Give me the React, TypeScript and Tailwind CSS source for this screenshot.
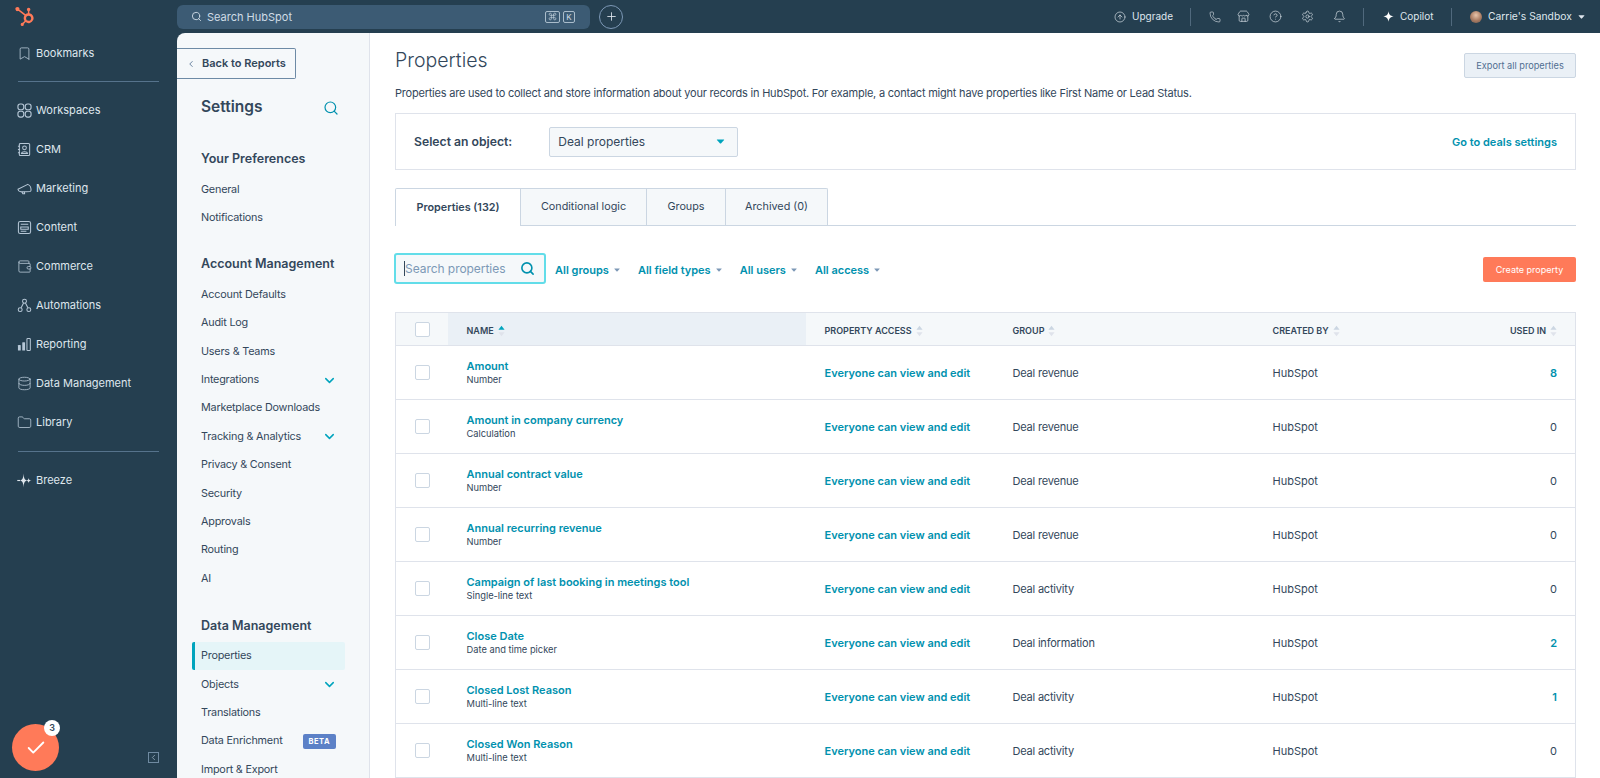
import React from "react";
import { SiHubspot } from "react-icons/si";
import {
  Bookmark, Wallet, Database, Folder,
  Search, ChevronDown, ChevronLeft, Plus, Command, CircleArrowUp, Phone, Store, CircleHelp,
  Settings, Bell, Check,
} from "lucide-react";

const font = "font-['Inter','Liberation_Sans',sans-serif]";

function Grid4({ className }: { className?: string }) {
  return (
    <svg viewBox="0 0 16 16" className={className} fill="none" stroke="currentColor" strokeWidth="1.2">
      <rect x="1" y="1" width="6.2" height="6.2" rx="2.4" />
      <rect x="8.8" y="1" width="6.2" height="6.2" rx="2.4" />
      <rect x="1" y="8.8" width="6.2" height="6.2" rx="2.4" />
      <rect x="8.8" y="8.8" width="6.2" height="6.2" rx="2.4" />
    </svg>
  );
}

function CrmIcon({ className }: { className?: string }) {
  return (
    <svg viewBox="0 0 16 16" className={className} fill="none" stroke="currentColor" strokeWidth="1.1">
      <rect x="2.5" y="1.5" width="11" height="13" rx="1.2" />
      <circle cx="8" cy="6.2" r="2" />
      <path d="M4.8 12.2 C5.2 9.8 10.8 9.8 11.2 12.2 Z" />
      <path d="M1 4.5 H3 M1 8 H3 M1 11.5 H3" />
    </svg>
  );
}

function MegaIcon({ className }: { className?: string }) {
  return (
    <svg viewBox="0 0 16 16" className={className} fill="none" stroke="currentColor" strokeWidth="1.1" strokeLinejoin="round">
      <path d="M1 8.8 L11.5 3.6 C13.6 4.4 15 7 15 9.6 C15 10.4 14.6 11 13.8 11.2 L5 11.6 C3 11.6 1.4 10.6 1 8.8Z" />
      <path d="M5.4 11.6 L6.2 13.6 H8.2 L7.8 11.5" />
    </svg>
  );
}

function ContentIcon({ className }: { className?: string }) {
  return (
    <svg viewBox="0 0 16 16" className={className} fill="none" stroke="currentColor" strokeWidth="1.1">
      <rect x="1.5" y="1.5" width="13" height="13" rx="2" />
      <path d="M4 4.5 H12 M4 7.5 H12 V9.8 H4Z M4 12 H10" />
    </svg>
  );
}

function AutoIcon({ className }: { className?: string }) {
  return (
    <svg viewBox="0 0 16 16" className={className} fill="none" stroke="currentColor" strokeWidth="1.1">
      <circle cx="8" cy="3.4" r="2.1" />
      <circle cx="3.4" cy="12.4" r="2.1" />
      <circle cx="12.6" cy="12.4" r="2.1" />
      <path d="M7 5.3 L4.4 10.5 M9 5.3 L11.6 10.5" />
    </svg>
  );
}

function ReportIcon({ className }: { className?: string }) {
  return (
    <svg viewBox="0 0 16 16" className={className}>
      <rect x="1" y="8.5" width="3" height="6" rx="0.5" fill="currentColor" />
      <rect x="5.6" y="5.5" width="3" height="9" rx="0.5" fill="currentColor" />
      <rect x="10.6" y="1.5" width="3.6" height="13" rx="0.8" fill="none" stroke="currentColor" strokeWidth="1.1" />
    </svg>
  );
}

function Spark({ className }: { className?: string }) {
  return (
    <svg viewBox="0 0 16 16" className={className} fill="currentColor">
      <path d="M8 0.5 C8.8 5.4 10.6 7.2 15.5 8 C10.6 8.8 8.8 10.6 8 15.5 C7.2 10.6 5.4 8.8 0.5 8 C5.4 7.2 7.2 5.4 8 0.5Z" />
    </svg>
  );
}

function Breeze({ className }: { className?: string }) {
  return (
    <svg viewBox="0 0 16 16" className={className} fill="currentColor">
      <path d="M7 0.5 C7.3 5.5 8 7.2 10.8 8 C8 8.8 7.3 10.5 7 15.5 C6.7 10.5 6 8.8 3.2 8 C6 7.2 6.7 5.5 7 0.5Z" />
      <path d="M12.4 5 C12.6 6.9 13 7.6 15.5 8 C13 8.4 12.6 9.1 12.4 11 C12.2 9.1 11.8 8.4 9.6 8 C11.8 7.6 12.2 6.9 12.4 5Z" />
      <rect x="0.3" y="7.4" width="3" height="1.2" />
    </svg>
  );
}

function Caret({ className }: { className?: string }) {
  return (
    <svg viewBox="0 0 8 5" className={className} fill="currentColor">
      <path d="M0.6 0.4 H7.4 Q7.9 0.4 7.6 0.9 L4.4 4.4 Q4 4.8 3.6 4.4 L0.4 0.9 Q0.1 0.4 0.6 0.4Z" />
    </svg>
  );
}

function SortIcon({ active }: { active?: boolean }) {
  return (
    <svg viewBox="0 0 8 13" className="w-[7px] h-[12px] ml-[4px] shrink-0">
      <path d="M4 0.5 L7.5 5 H0.5Z" fill={active ? "#00a4bd" : "#cbd6e2"} />
      <path d="M4 12.5 L7.5 8 H0.5Z" fill="#dfe3eb" />
    </svg>
  );
}

const navTop = [
  { icon: <Grid4 className="w-[15px] h-[15px]" />, label: "Workspaces" },
  { icon: <CrmIcon className="w-[15px] h-[15px]" />, label: "CRM" },
  { icon: <MegaIcon className="w-[15px] h-[15px]" />, label: "Marketing" },
  { icon: <ContentIcon className="w-[15px] h-[15px]" />, label: "Content" },
  { icon: <Wallet className="w-[15px] h-[15px]" strokeWidth={1.3} />, label: "Commerce" },
  { icon: <AutoIcon className="w-[15px] h-[15px]" />, label: "Automations" },
  { icon: <ReportIcon className="w-[15px] h-[15px]" />, label: "Reporting" },
  { icon: <Database className="w-[15px] h-[15px]" strokeWidth={1.3} />, label: "Data Management" },
  { icon: <Folder className="w-[15px] h-[15px]" strokeWidth={1.3} />, label: "Library" },
];

function NavItem({ icon, label }: { icon: React.ReactNode; label: string }) {
  return (
    <div className="flex items-center h-[39px] pl-[17px] gap-[4px] text-[#dfe6ed] text-[11px]">
      <span className="w-[15px] flex justify-center text-[#b6c7d6]">{icon}</span>
      <span>{label}</span>
    </div>
  );
}

function SettingItem({ label, expand, active, beta }: { label: string; expand?: boolean; active?: boolean; beta?: boolean }) {
  if (active) {
    return (
      <div className="relative flex items-center h-[28.4px] ml-[15px] w-[153px] pl-[6px] bg-[#e5f5f8] border-l-[3px] border-[#00a4bd] rounded-[2px] text-[#33475b] text-[10.8px] tracking-[-0.2px]">
        {label}
      </div>
    );
  }
  return (
    <div className="flex items-center justify-between h-[28.4px] pl-[24px] pr-[31px] text-[#33475b] text-[10.8px] tracking-[-0.2px]">
      <span>{label}</span>
      {expand && <ChevronDown className="w-[15px] h-[15px] text-[#00a4bd] mr-[1px]" strokeWidth={2.4} />}
      {beta && (
        <span className="bg-[#5c81c7] text-white text-[7.5px] font-bold tracking-[0.5px] px-[6px] h-[15px] flex items-center rounded-[2px] mr-[2px]">
          BETA
        </span>
      )}
    </div>
  );
}

function SectionHead({ label, className }: { label: string; className: string }) {
  return (
    <div className={`flex items-center h-[24px] pl-[24px] text-[#33475b] text-[12.5px] font-semibold ${className}`}>
      {label}
    </div>
  );
}

const rows = [
  ["Amount", "Number", "Deal revenue", "8"],
  ["Amount in company currency", "Calculation", "Deal revenue", "0"],
  ["Annual contract value", "Number", "Deal revenue", "0"],
  ["Annual recurring revenue", "Number", "Deal revenue", "0"],
  ["Campaign of last booking in meetings tool", "Single-line text", "Deal activity", "0"],
  ["Close Date", "Date and time picker", "Deal information", "2"],
  ["Closed Lost Reason", "Multi-line text", "Deal activity", "1"],
  ["Closed Won Reason", "Multi-line text", "Deal activity", "0"],
];

function Checkbox() {
  return <div className="w-[15px] h-[15px] bg-white border border-[#cbd6e2] rounded-[2px]" />;
}

function Filter({ label }: { label: string }) {
  return (
    <div className="flex items-center gap-[5px] text-[#0091ae] text-[11px] font-semibold">
      {label}
      <Caret className="w-[6px] h-[4px] text-[#7c98b6]" />
    </div>
  );
}

function Head({ label }: { label: string }) {
  return (
    <th className="pl-[19px] pt-[3px] font-semibold text-left">
      <div className="flex items-center text-[9px] text-[#33475b]">
        {label}
        <SortIcon />
      </div>
    </th>
  );
}

export default function App() {
  return (
    <div className={`${font} h-screen w-full overflow-hidden flex flex-col bg-[#253f50]`}>
      <header className="h-[33px] shrink-0 flex items-center bg-[#253f50] text-[#dfe6ed]">
        <div className="w-[177px] shrink-0 pl-[15px]">
          <SiHubspot className="w-[19px] h-[19px] text-[#ff7a59]" />
        </div>
        <div className="w-[413px] h-[24px] shrink-0 rounded-[6px] bg-[#3c5b74] flex items-center pl-[14px] pr-[15px] text-[#cfdbe6] text-[11px]">
          <Search className="w-[11px] h-[11px] mr-[5px]" strokeWidth={2} />
          <span className="pt-[1px]">Search HubSpot</span>
          <span className="ml-auto flex gap-[3px]">
            <span className="w-[15px] h-[12px] border border-[#a9bccb] rounded-[2px] flex items-center justify-center">
              <Command className="w-[9px] h-[9px]" strokeWidth={1.6} />
            </span>
            <span className="w-[12px] h-[12px] border border-[#a9bccb] rounded-[2px] flex items-center justify-center text-[8px] leading-none">
              K
            </span>
          </span>
        </div>
        <div className="ml-[9px] w-[24px] h-[24px] rounded-full border border-[#7c98b6] flex items-center justify-center">
          <Plus className="w-[13px] h-[13px]" strokeWidth={1.6} />
        </div>
        <div className="ml-auto flex items-center text-[10px] text-[#dfe6ed]">
          <CircleArrowUp className="w-[12px] h-[12px]" strokeWidth={1.3} />
          <span className="ml-[6px] w-[41px]">Upgrade</span>
          <span className="ml-[17px] w-px h-[18px] bg-[#50697d]" />
          <Phone className="ml-[18px] w-[12px] h-[12px]" strokeWidth={1.2} />
          <Store className="ml-[16px] w-[13px] h-[13px]" strokeWidth={1.2} />
          <CircleHelp className="ml-[19px] w-[13px] h-[13px]" strokeWidth={1.2} />
          <Settings className="ml-[19px] w-[13px] h-[13px]" strokeWidth={1.2} />
          <Bell className="ml-[19px] w-[13px] h-[13px]" strokeWidth={1.2} />
          <span className="ml-[17px] w-px h-[18px] bg-[#50697d]" />
          <Spark className="ml-[19px] w-[11px] h-[11px] text-white" />
          <span className="ml-[6px] w-[34px]">Copilot</span>
          <span className="ml-[17px] w-px h-[18px] bg-[#50697d]" />
          <span className="ml-[18px] w-[12px] h-[12px] rounded-full bg-[radial-gradient(circle_at_50%_35%,#e7c4ab_0%,#a97b62_55%,#6c5a50_100%)]" />
          <span className="ml-[6px] w-[84px] whitespace-nowrap text-[10.3px]">Carrie's Sandbox</span>
          <Caret className="ml-[6px] mr-[15px] w-[7px] h-[4px]" />
        </div>
      </header>

      <div className="flex-1 flex min-h-0">
        <aside className="relative w-[177px] shrink-0 pt-[1px]">
          <NavItem icon={<Bookmark className="w-[15px] h-[15px]" strokeWidth={1.3} />} label="Bookmarks" />
          <div className="mx-[18px] mt-[8px] mb-[9px] h-px bg-[#56738c]" />
          {navTop.map((n) => (
            <NavItem key={n.label} icon={n.icon} label={n.label} />
          ))}
          <div className="mx-[18px] mt-[9px] mb-[9px] h-px bg-[#56738c]" />
          <NavItem icon={<Breeze className="w-[15px] h-[15px] text-[#dfe6ed]" />} label="Breeze" />

          <div className="absolute left-[12px] bottom-[7px] w-[47px] h-[47px] rounded-full bg-[#ff7a59] flex items-center justify-center">
            <Check className="w-[22px] h-[22px] text-white" strokeWidth={2} />
            <span className="absolute right-[-1px] top-[-4px] w-[16px] h-[16px] rounded-full bg-white text-[#33475b] text-[9px] font-semibold flex items-center justify-center">
              3
            </span>
          </div>
          <div className="absolute left-[148px] bottom-[15px] w-[11px] h-[11px] border border-[#6f8aa1] flex items-center justify-center">
            <ChevronLeft className="w-[9px] h-[9px] text-[#9fb3c4]" strokeWidth={2} />
          </div>
        </aside>

        <nav className="w-[193px] shrink-0 bg-[#f5f8fa] border-r border-[#dfe3eb] rounded-tl-[8px] pt-[15px] overflow-hidden">
          <div className="w-[119px] h-[31px] bg-[#f5f8fa] border border-l-0 border-[#6d8aa5] rounded-r-[2px] flex items-center text-[11px] font-semibold text-[#33475b]">
            <ChevronLeft className="ml-[9px] mr-[6px] w-[10px] h-[10px] text-[#516f90]" strokeWidth={2} />
            Back to Reports
          </div>
          <div className="flex items-center justify-between h-[28px] mt-[14px] pl-[24px] pr-[30px] text-[#33475b] text-[15.5px] font-semibold">
            Settings
            <Search className="w-[16px] h-[16px] mt-[2px] text-[#0091ae]" strokeWidth={1.8} />
          </div>
          <SectionHead label="Your Preferences" className="mt-[26px] mb-[5px]" />
          <SettingItem label="General" />
          <SettingItem label="Notifications" />
          <SectionHead label="Account Management" className="mt-[20px] mb-[4px]" />
          <SettingItem label="Account Defaults" />
          <SettingItem label="Audit Log" />
          <SettingItem label="Users & Teams" />
          <SettingItem label="Integrations" expand />
          <SettingItem label="Marketplace Downloads" />
          <SettingItem label="Tracking & Analytics" expand />
          <SettingItem label="Privacy & Consent" />
          <SettingItem label="Security" />
          <SettingItem label="Approvals" />
          <SettingItem label="Routing" />
          <SettingItem label="AI" />
          <SectionHead label="Data Management" className="mt-[21px] mb-[4px]" />
          <SettingItem label="Properties" active />
          <SettingItem label="Objects" expand />
          <SettingItem label="Translations" />
          <SettingItem label="Data Enrichment" beta />
          <SettingItem label="Import & Export" />
        </nav>

        <main className="flex-1 min-w-0 bg-white pt-[13px] pl-[25px] pr-[24px] overflow-hidden text-[#33475b]">
          <div className="flex justify-between h-[38px]">
            <h1 className="h-[28px] leading-[28px] text-[19.5px] font-light">Properties</h1>
            <button className="mt-[7px] w-[112px] h-[25px] bg-[#eaf0f6] border border-[#cbd6e2] rounded-[2px] text-[#506e91] text-[9.2px]">
              Export all properties
            </button>
          </div>
          <p className="h-[18px] leading-[18px] text-[11px] tracking-[-0.22px]">
            Properties are used to collect and store information about your records in HubSpot. For example, a contact might have properties like First Name or Lead Status.
          </p>

          <div className="mt-[11px] h-[57px] border border-[#dfe3eb] flex items-center pl-[18px] pr-[18px]">
            <span className="pt-[2px] text-[12.2px] font-semibold">Select an object:</span>
            <div className="ml-[37px] w-[189px] h-[30px] bg-[#f5f8fa] border border-[#cbd6e2] rounded-[2px] flex items-center justify-between pl-[8px] pr-[12px] text-[12px]">
              Deal properties
              <Caret className="w-[9px] h-[5px] text-[#00a4bd]" />
            </div>
            <span className="ml-auto pt-[2px] text-[#0091ae] text-[11px] font-semibold">Go to deals settings</span>
          </div>

          <div className="mt-[18px] h-[38px] flex border-b border-[#cbd6e2] text-[10.8px]">
            <div className="w-[126px] h-[38px] pt-[1px] border border-b-0 border-[#cbd6e2] bg-white rounded-tl-[2px] flex items-center justify-center font-semibold">
              Properties (132)
            </div>
            <div className="w-[126px] pt-[1px] border-t border-r border-[#cbd6e2] bg-[#f5f8fa] flex items-center justify-center">Conditional logic</div>
            <div className="w-[79px] pt-[1px] border-t border-r border-[#cbd6e2] bg-[#f5f8fa] flex items-center justify-center">Groups</div>
            <div className="w-[102px] pt-[1px] border-t border-r border-[#cbd6e2] bg-[#f5f8fa] flex items-center justify-center rounded-tr-[2px]">Archived (0)</div>
          </div>

          <div className="mt-[27px] h-[31px] flex items-center">
            <div className="w-[152px] h-[31px] ml-[-1px] bg-[#f5f8fa] border-2 border-[#62dde9] rounded-[3px] flex items-center pl-[8px] pr-[9px] text-[#7c98b6] text-[12px] tracking-[-0.05px]">
              <span className="w-px h-[15px] bg-[#33475b]" />
              <span>Search properties</span>
              <Search className="ml-auto w-[15px] h-[15px] text-[#0091ae]" strokeWidth={2.6} />
            </div>
            <div className="ml-[9px] mt-[3px] flex gap-[18px]">
              <Filter label="All groups" />
              <Filter label="All field types" />
              <Filter label="All users" />
              <Filter label="All access" />
            </div>
            <button className="ml-auto mt-[2px] w-[93px] h-[25px] bg-[#ff7a59] rounded-[2px] text-white text-[9px]">Create property</button>
          </div>

          <table className="mt-[28px] w-full table-fixed border-collapse border-x border-[#dfe3eb]">
            <colgroup>
              <col className="w-[52px]" />
              <col className="w-[358px]" />
              <col className="w-[188px]" />
              <col className="w-[260px]" />
              <col className="w-[160px]" />
              <col />
            </colgroup>
            <thead>
              <tr className="h-[33px] bg-[#f5f8fa] border-y border-[#dfe3eb]">
                <th className="pl-[19px]"><Checkbox /></th>
                <th className="pl-[19px] pt-[3px] bg-[#eaf0f6] font-semibold text-left">
                  <div className="flex items-center text-[9px] text-[#33475b]">
                    NAME
                    <SortIcon active />
                  </div>
                </th>
                <Head label="PROPERTY ACCESS" />
                <Head label="GROUP" />
                <Head label="CREATED BY" />
                <th className="pr-[18px] pt-[3px] font-semibold">
                  <div className="flex items-center justify-end text-[9px] text-[#33475b]">
                    USED IN
                    <SortIcon />
                  </div>
                </th>
              </tr>
            </thead>
            <tbody>
              {rows.map(([name, type, group, used]) => (
                <tr key={name} className="h-[54px] border-b border-[#dfe3eb]">
                  <td className="pl-[19px]"><Checkbox /></td>
                  <td className="pl-[19px]">
                    <div className="text-[#0091ae] text-[11px] font-semibold leading-[15px]">{name}</div>
                    <div className="text-[9.3px] leading-[12.5px]">{type}</div>
                  </td>
                  <td className="pl-[19px] pt-[2px] text-[#0091ae] text-[11px] font-semibold whitespace-nowrap">Everyone can view and edit</td>
                  <td className="pl-[19px] pt-[2px] text-[11px] tracking-[-0.2px]">{group}</td>
                  <td className="pl-[19px] pt-[2px] text-[11px]">HubSpot</td>
                  <td className={`pr-[18px] pt-[2px] text-right text-[11px] ${used === "0" ? "" : "text-[#0091ae] font-semibold"}`}>{used}</td>
                </tr>
              ))}
            </tbody>
          </table>
        </main>
      </div>
    </div>
  );
}
